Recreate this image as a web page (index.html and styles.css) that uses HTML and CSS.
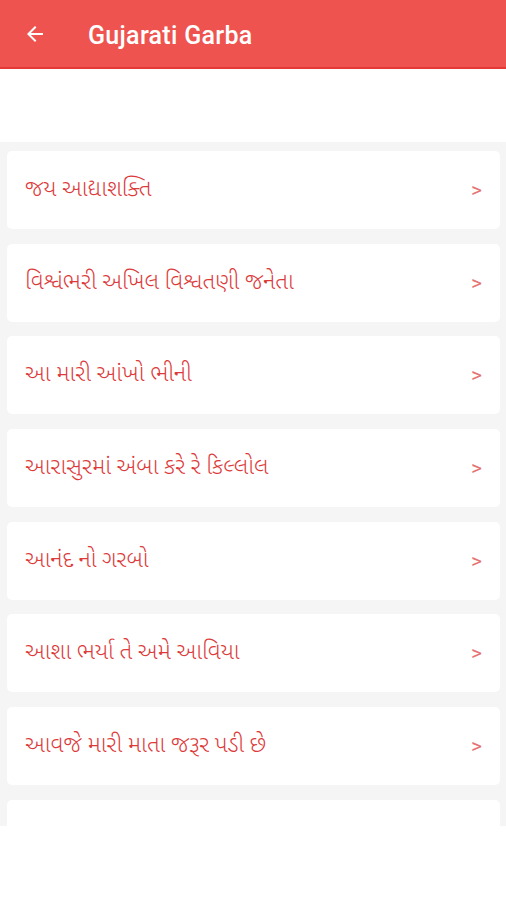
FILE: index.html
```html
<!DOCTYPE html>
<html lang="gu">
<head>
    <meta charset="UTF-8">
    <meta name="viewport" content="width=device-width, initial-scale=1.0">
    <title>Gujarati Garba</title>
    <link rel="stylesheet" href="styles.css">
</head>
<body>
    <header class="app-bar">
        <svg class="back-icon" viewBox="0 0 24 24" width="24" height="24">
            <path d="M20 11H7.83l5.59-5.59L12 4l-8 8 8 8 1.41-1.41L7.83 13H20v-2z" fill="#fff"/>
        </svg>
        <h1 class="app-title">Gujarati Garba</h1>
    </header>

    <div class="spacer"></div>

    <!-- list of garba songs -->
    <div class="song-list">
        <div class="song-card"><span class="song-name">જય આદ્યાશક્તિ</span><span class="chevron">&gt;</span></div>
        <div class="song-card"><span class="song-name">વિશ્વંભરી અખિલ વિશ્વતણી જનેતા</span><span class="chevron">&gt;</span></div>
        <div class="song-card"><span class="song-name">આ મારી આંખો ભીની</span><span class="chevron">&gt;</span></div>
        <div class="song-card"><span class="song-name">આરાસુરમાં અંબા કરે રે કિલ્લોલ</span><span class="chevron">&gt;</span></div>
        <div class="song-card"><span class="song-name">આનંદ નો ગરબો</span><span class="chevron">&gt;</span></div>
        <div class="song-card"><span class="song-name">આશા ભર્યા તે અમે આવિયા</span><span class="chevron">&gt;</span></div>
        <div class="song-card"><span class="song-name">આવજે મારી માતા જરૂર પડી છે</span><span class="chevron">&gt;</span></div>
        <div class="song-card"></div>
    </div>
</body>
</html>
```

FILE: styles.css
```css
body {
    margin: 0;
    font-family: Roboto, "Noto Sans Gujarati", "Noto Sans", sans-serif;
    background: #fff;
}

.app-bar {
    height: 69px;
    background-color: #ef5350;
    border-bottom: 2px solid #e53935;
    display: flex;
    align-items: center;
    padding-left: 23px;
    box-sizing: border-box;
}

.back-icon {
    flex-shrink: 0;
}

.app-title {
    margin: 4px 0 0 41px;
    color: #fff;
    font-size: 25px;
    font-weight: 500;
    letter-spacing: 0.3px;
}

.spacer {
    height: 73px;
}

.song-list {
    background-color: #f5f5f5;
    padding: 9px 6px 0 7px;
    height: 684px;
    box-sizing: border-box;
    overflow: hidden;
    display: flex;
    flex-direction: column;
    gap: 14.7px;
}

.song-card {
    flex-shrink: 0;
    height: 78px;
    background-color: #fff;
    border-radius: 5px;
    display: flex;
    align-items: center;
    justify-content: space-between;
    padding: 0 18px 0 18px;
    box-sizing: border-box;
}

.song-name {
    color: #dc3a3a;
    font-size: 23px;
    font-weight: 300;
}

.chevron {
    color: #e57373;
    font-size: 21px;
}
```
